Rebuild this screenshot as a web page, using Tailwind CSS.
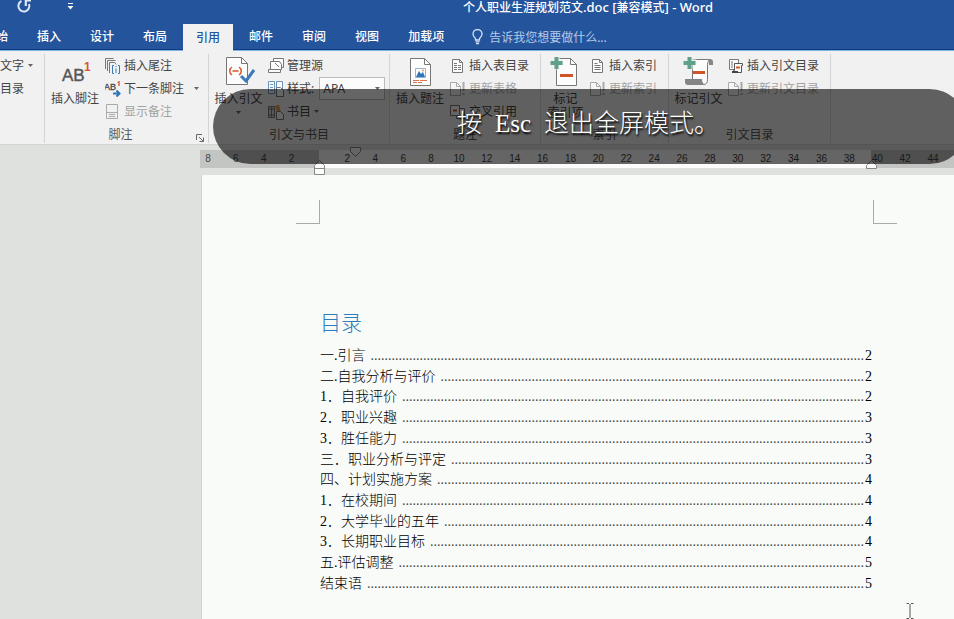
<!DOCTYPE html>
<html lang="zh-CN">
<head>
<meta charset="utf-8">
<title>个人职业生涯规划范文.doc - Word</title>
<script src="https://cdn.jsdelivr.net/npm/@tailwindcss/browser@4"></script>
</head>
<body class="relative flex h-screen flex-col overflow-hidden bg-[#dfe1df] font-['Noto_Sans','Noto_Sans_CJK_SC',sans-serif] text-xs text-[#444]">

<svg class="hidden">
  <symbol id="caret" viewBox="0 0 5 3"><path d="M0 0h5L2.500 3z" fill="#666"/></symbol>
  <symbol id="page" viewBox="0 0 16 16"><path d="M2.500 1.500h7l3 3v10h-10z" fill="#fbfcfb" stroke="#777"/><path d="M9.500 1.500v3h3" fill="none" stroke="#777"/><path d="M4.500 5.500h3m-3 2h6m-6 2h6m-6 2h6" stroke="#777"/></symbol>
  <symbol id="table-page" viewBox="0 0 16 16"><path d="M2.500 1.500h7l3 3v10h-10z" fill="#fbfcfb" stroke="#777"/><path d="M9.500 1.500v3h3" fill="none" stroke="#777"/><path d="M4 5.500h3m-3 2h3m1 0h3m-7 2h3m1 0h3m-7 2h3m1 0h3" stroke="#777"/></symbol>
  <symbol id="update" viewBox="0 0 16 16"><path d="M.500 1.500h6l4 4v9h-10z" fill="#f6f6f6" stroke="#aaa"/><path d="M6.500 1.500v4h4" fill="none" stroke="#aaa"/><path d="M13.500 1v9m0 2v2" stroke="#aaa" stroke-width="2"/></symbol>
</svg>

<header class="shrink-0 bg-[#24549c] text-white">
  <div class="relative flex h-6 justify-center pl-[222px]">
    <button aria-label="重复" class="absolute left-4 top-0"><svg class="h-[14px] w-4" viewBox="0 0 16 14" fill="none" stroke="#dfe8f5" stroke-width="2"><path d="M5.500 1A5.500 5.500 0 1 0 13 4"/><path d="M15 .500H9.800v5.500" stroke-width="2.200"/></svg></button>
    <button aria-label="自定义快速访问工具栏" class="absolute left-[67px] top-[3px]"><svg class="h-[7px] w-[7px]" viewBox="0 0 7 7"><path d="M1 0h5v1H1zM0.500 3h6L3.500 6.500z" fill="#fff"/></svg></button>
    <h1 class="text-xs font-medium leading-[14px]">个人职业生涯规划范文<span class="text-[13px]">.doc [</span>兼容模式<span class="text-[13px]">] - Word</span></h1>
  </div>
  <nav class="-ml-[29px] flex h-[27px] gap-[3px] border-b border-[#7fb4ea] font-medium whitespace-nowrap shadow-[inset_0_-1px_0_#123a7c]">
    <button class="px-[13px]">开始</button>
    <button class="px-[13px]">插入</button>
    <button class="px-[13px]">设计</button>
    <button class="px-[13px]">布局</button>
    <button class="-mb-px bg-[#f1f1f1] px-[13px] text-[#24549c]">引用</button>
    <button class="px-[13px]">邮件</button>
    <button class="px-[13px]">审阅</button>
    <button class="px-[13px]">视图</button>
    <button class="px-[13px]">加载项</button>
    <label class="ml-3 flex flex-1 items-center gap-[6px]">
      <svg class="h-4 w-[11px]" viewBox="0 0 11 16" fill="none" stroke="#d5e2f5" stroke-width="1.300"><path d="M3.500 11V9.500C2.500 8 1 7.200 1 5a4.500 4.500 0 0 1 9 0c0 2.200-1.500 3-2.500 4.500V11z"/><path d="M3.500 12.800h4M4 14.700h3"/></svg>
      <input aria-label="告诉我您想要做什么" placeholder="告诉我您想要做什么..." class="w-48 bg-transparent pt-px font-normal outline-none placeholder:text-[#b5cbea]">
    </label>
  </nav>
</header>

<section aria-label="引用" class="flex h-[94px] shrink-0 border-b border-[#d2d4d2] bg-[#f1f1f1] pt-[3px] pb-px leading-4 whitespace-nowrap">

  <div class="flex w-[45px] justify-end border-r border-[#d4d4d4]">
    <div class="grid auto-rows-[23px] content-start">
      <button class="flex items-center gap-1 pr-[11px]">添加文字 <svg class="h-[3px] w-[5px]"><use href="#caret"/></svg></button>
      <button class="pr-5 text-left">更新目录</button>
    </div>
  </div>

  <div class="flex w-[164px] flex-col border-r border-[#d4d4d4]">
    <div class="flex h-[69px]">
      <button class="flex w-[60px] flex-col items-center pt-px">
        <svg class="h-9 w-8" viewBox="0 0 32 36" font-family="Liberation Sans, sans-serif"><text x="3" y="26" font-size="17" fill="#555" stroke="#555" stroke-width=".4">AB</text><text x="25" y="16" font-size="12" font-weight="bold" fill="#d8562a">1</text></svg>
        <span>插入脚注</span>
      </button>
      <div class="grid flex-1 auto-rows-[23px]">
        <button class="flex items-center gap-[3px]"><svg class="h-4 w-4" viewBox="0 0 16 16" fill="none" stroke="#777"><path d="M.500 11V.500h8M2.500 13V2.500h8M4.500 15V4.500h5l2 2"/><path d="M9 7.500H7.500v8H9m4-8h1.500v8H13M11 8v1m0 1.500V15" stroke="#3d78b8"/></svg>插入尾注</button>
        <button class="flex items-center gap-[3px]"><svg class="h-4 w-4" viewBox="0 0 16 16"><text x="-1" y="9" font-size="9" font-family="Liberation Sans, sans-serif" fill="#444" stroke="#444" stroke-width=".3">AB</text><path d="M14 0v5M12.500 1.500 14 .500" stroke="#d8562a" fill="none" stroke-width="1.300"/><path d="M8 12.500h6M11.500 9.500l3 3-3 3" stroke="#2f73ba" stroke-width="2" fill="none"/></svg>下一条脚注 <svg class="ml-auto mr-[9px] h-[3px] w-[5px]"><use href="#caret"/></svg></button>
        <button class="flex items-center gap-[3px] text-[#a3a3a3]"><svg class="h-4 w-4" viewBox="0 0 16 16" fill="none" stroke="#aaa"><path d="M1.500.500h11v14h-11zM1.500 8.500h11M4 10.500h6m-6 2h6"/></svg>显示备注</button>
      </div>
    </div>
    <div class="flex flex-1 items-end pr-1 text-[#555]"><span class="flex-1 text-center">脚注</span>
      <button aria-label="脚注和尾注" class="w-2 pb-px"><svg class="h-[8px] w-[8px]" viewBox="0 0 8 8" fill="none" stroke="#666"><path d="M.500 6V.500H6M3 3l4 4M7.500 3.500v4h-4"/></svg></button></div>
  </div>

  <div class="flex w-[181px] flex-col border-r border-[#d4d4d4]">
    <div class="flex h-[69px]">
      <button class="flex w-[59px] flex-col items-center pt-px">
        <svg class="h-9 w-8" viewBox="0 0 32 36" fill="none"><path d="M3.500 2.500h15l6 6v21h-21z" fill="#fbfcfb" stroke="#777"/><path d="M18.500 2.500v6h6" stroke="#777"/><path d="M9 12c-3 2-3 6 0 8m7-8c3 2 3 6 0 8M9.500 16h6" stroke="#d8562a" stroke-width="1.500"/><path d="m18 21 5 5 8-11" stroke="#3d78b8" stroke-width="3"/></svg>
        <span>插入引文</span><svg class="mt-1 h-[3px] w-[5px]"><use href="#caret"/></svg>
      </button>
      <div class="grid auto-rows-[23px]">
        <button class="flex items-center gap-[3px]"><svg class="h-4 w-4" viewBox="0 0 16 16" fill="#fbfcfb" stroke="#777"><path d="M5.500.500h10v9h-10z"/><path d="M2.500 3.500h9l2 3v5h-11z"/><path d="M.500 11.500h12v3H.500zM7 5l4 4"/></svg>管理源</button>
        <div class="flex items-center gap-[3px]"><svg class="h-4 w-4" viewBox="0 0 16 16" fill="#fbfcfb" stroke="#6b94bd"><path d="M.500.500h6v12h-6zM8.500.500h6v12h-6z"/><path d="M2 3.500h3m-3 3h3m-3 3h3" /><path d="M8.500 6.500h4l3 3v6h-7z" stroke="#777"/></svg><label for="style">样式:</label>
          <span class="relative ml-[2px]"><select id="style" class="block h-[23px] w-[66px] appearance-none border border-[#bcbcbc] bg-[#fbfcfb] pl-[3px] outline-none"><option>APA</option></select><svg class="pointer-events-none absolute right-[5px] top-[10px] h-[3px] w-[5px]"><use href="#caret"/></svg></span></div>
        <button class="flex items-center gap-[3px]"><svg class="h-4 w-4" viewBox="0 0 16 16"><path d="M.500 2.500h3v11h-3zM3.500 2.500h3v11h-3z" fill="#ddd" stroke="#777"/><path d="M0 5h7M0 11h7" stroke="#777"/><path d="m7 2 4-1.500 2 8h-4z" fill="#e0a050"/><path d="M8.500 7.500h4l3 3v5h-7z" fill="#fbfcfb" stroke="#777"/></svg>书目 <svg class="h-[3px] w-[5px]"><use href="#caret"/></svg></button>
      </div>
    </div>
    <div class="flex flex-1 items-end justify-center text-[#555]">引文与书目</div>
  </div>

  <div class="flex w-[151px] flex-col border-r border-[#d4d4d4]">
    <div class="flex h-[69px]">
      <button class="flex w-[60px] flex-col items-center pt-px">
        <svg class="h-9 w-8" viewBox="0 0 32 36" fill="none"><path d="M6.500 3.500h14l6 6v21h-20z" fill="#fbfcfb" stroke="#777"/><path d="M20.500 3.500v6h6" stroke="#777"/><path d="M11.500 13.500h10v9h-10z" stroke="#9ab4cf"/><path d="m12 22 3-6 2 3 2-2 2 5z" fill="#2f73ba"/><circle cx="19" cy="15.500" r="1" fill="#e9a13b"/><path d="M9 25.500h6m1 0h7m-14 2h4m1 0h4" stroke="#d8734d"/></svg>
        <span>插入题注</span>
      </button>
      <div class="grid auto-rows-[23px]">
        <button class="flex items-center gap-[3px]"><svg class="h-4 w-4"><use href="#table-page"/></svg>插入表目录</button>
        <button class="flex items-center gap-[3px] text-[#a3a3a3]"><svg class="h-4 w-4"><use href="#update"/></svg>更新表格</button>
        <button class="flex items-center gap-[3px]"><svg class="h-4 w-4" viewBox="0 0 16 16"><path d="M6.500 4.500h8v10h-8z" fill="#fbfcfb" stroke="#777"/><path d="M.500 1.500h9v10h-9z" fill="#fbfcfb" stroke="#777"/><path d="M3 6.500h4" stroke="#d8562a" stroke-width="2"/></svg>交叉引用</button>
      </div>
    </div>
    <div class="flex flex-1 items-end justify-center text-[#555]">题注</div>
  </div>

  <div class="flex w-[128px] flex-col border-r border-[#d4d4d4]">
    <div class="flex h-[69px]">
      <button class="flex w-[49px] flex-col items-center pt-px">
        <svg class="h-9 w-8" viewBox="0 0 32 36" fill="none"><path d="M6.500 3.500h14l6 6v21h-20z" fill="#fbfcfb" stroke="#777"/><path d="M20.500 3.500v6h6" stroke="#777"/><path d="M6.500.500v14m-7-7h14" stroke="#f1f1f1" stroke-width="6"/><path d="M6.500 2v12m-6-6h12" stroke="#5fa08c" stroke-width="4"/><path d="M10 20.500h13" stroke="#cf5524" stroke-width="3"/></svg>
        <span>标记</span><span class="-mt-[2px]">索引项</span>
      </button>
      <div class="grid auto-rows-[23px]">
        <button class="flex items-center gap-[3px]"><svg class="h-4 w-4"><use href="#page"/></svg>插入索引</button>
        <button class="flex items-center gap-[3px] text-[#a3a3a3]"><svg class="h-4 w-4"><use href="#update"/></svg>更新索引</button>
      </div>
    </div>
    <div class="flex flex-1 items-end justify-center text-[#555]">索引</div>
  </div>

  <div class="flex w-[162px] flex-col border-r border-[#d4d4d4]">
    <div class="flex h-[69px]">
      <button class="flex w-[59px] flex-col items-center pt-px">
        <svg class="h-9 w-8" viewBox="0 0 32 36" fill="none"><path d="M9.500 4.500h17q-2 2-2 5v15q0 5-4 5H9.500z" fill="#fbfcfb" stroke="#777"/><path d="M24 4h3q3 0 3 3v3h-4V7q0-2-2-3zM2 24h17q0 4 3 6H5q-3 0-3-3z" fill="#858585"/><path d="M6.500.500v14m-7-7h14" stroke="#f1f1f1" stroke-width="6"/><path d="M6.500 2v12m-6-6h12" stroke="#5fa08c" stroke-width="4"/><path d="M10 17.500h12" stroke="#cf5524" stroke-width="3"/></svg>
        <span>标记引文</span>
      </button>
      <div class="grid auto-rows-[23px]">
        <button class="flex items-center gap-[3px]"><svg class="h-4 w-4" viewBox="0 0 16 16" fill="#fbfcfb" stroke="#777"><path d="M1.500 1.500h9v10h-9zM4 3v7"/><path d="M6.500 5.500h8v2h-1v7h-8v-2h1z" stroke="#555"/><path d="M8 9.500h4" stroke="#d8562a" stroke-width="2"/><path d="M4 14h6" stroke="#444" stroke-width="2"/></svg>插入引文目录</button>
        <button class="flex items-center gap-[3px] text-[#a3a3a3]"><svg class="h-4 w-4"><use href="#update"/></svg>更新引文目录</button>
      </div>
    </div>
    <div class="flex flex-1 items-end justify-center text-[#555]">引文目录</div>
  </div>
</section>

<main class="flex min-h-0 flex-1 flex-col pt-[5px]">
  <div class="relative ml-[200px] grid h-4 shrink-0">
    <div class="col-start-1 row-start-1 flex"><div class="w-[119px] bg-[#c3c5c3]"></div><div class="w-[552px] bg-[#fbfcfb]"></div><div class="flex-1 bg-[#c3c5c3]"></div></div>
    <div id="ruler" class="col-start-1 row-start-1 -ml-[6px] grid w-[753px] grid-cols-27 text-center font-['Liberation_Sans',sans-serif] text-[10px] leading-[18px]"></div>
    <svg class="absolute -top-[3px] left-[150px] h-[10px] w-3" viewBox="0 0 12 10"><path d="M.500.500h10v4l-5 5-5-5z" fill="#fbfcfb" stroke="#888"/></svg>
    <svg class="absolute left-[114px] top-[10px] h-[15px] w-3" viewBox="0 0 12 15"><path d="M.500 14.500v-9l5-5 5 5v9zM.500 8.500h10" fill="#fbfcfb" stroke="#888"/></svg>
    <svg class="absolute left-[666px] top-[10px] h-[9px] w-3" viewBox="0 0 12 9"><path d="M.500 8.500v-3l5-5 5 5v3z" fill="#fbfcfb" stroke="#888"/></svg>
  </div>

  <article class="mt-[9px] ml-[201px] flex-1 overflow-hidden border-l border-[#cfd1cf] bg-[#f9fbf8] pt-[25px] pl-[94px] font-['Liberation_Serif','Noto_Sans_CJK_SC',serif] text-black">
    <div class="flex h-6 w-[601px] justify-between">
      <div class="w-6 border-r border-b border-[#a9aba9]"></div>
      <div class="w-6 border-b border-l border-[#a9aba9]"></div>
    </div>
    <div class="ml-6 w-[552px] pt-[84px]">
      <h2 class="text-[21px] leading-[30px] font-light text-[#2f7cbd]">目录</h2>
      <div id="toc" class="mt-2 flex h-[248px] flex-col justify-between text-sm leading-5 font-light"></div>
    </div>
  </article>
</main>

<svg class="absolute top-[603px] left-[906px] h-4 w-2" viewBox="0 0 8 16" fill="none" stroke="#555"><path d="M.500.500H3m2 0h2.500M.500 15.500H3m2 0h2.500M4 1v14"/></svg>

<div role="status" class="absolute top-[89px] -right-[13px] left-[213px] flex h-[75px] items-center justify-center gap-[13px] rounded-full bg-black/60 pb-[6px] pr-1 font-['Liberation_Serif','Noto_Sans_CJK_SC',serif] text-[25px] font-light text-white [text-shadow:1px_2px_2px_#000]">
  <span>按</span><span>Esc</span><span>退出全屏模式。</span>
</div>

<script>
  const ruler = document.getElementById('ruler');
  for (let n = -8; n <= 44; n += 2) {
    const s = document.createElement('span');
    s.textContent = n ? Math.abs(n) : '';
    ruler.append(s);
  }
  // title, page, number of leader dots
  const entries = [['一.引言', 2, 141], ['二.自我分析与评价', 2, 121], ['1．自我评价', 2, 132], ['2．职业兴趣', 3, 132],
    ['3．胜任能力', 3, 132], ['三．职业分析与评定', 3, 118], ['四、计划实施方案', 4, 122], ['1．在校期间', 4, 132],
    ['2．大学毕业的五年', 4, 120], ['3．长期职业目标', 4, 124], ['五.评估调整', 5, 133], ['结束语', 5, 142]];
  document.getElementById('toc').innerHTML = entries.map(([title, page, dots]) =>
    `<a href="#" class="flex h-5 whitespace-nowrap"><span class="flex-1">${title}</span><span class="mr-px text-[#444]">${'.'.repeat(dots)}</span><span>${page}</span></a>`).join('');
</script>
</body>
</html>
